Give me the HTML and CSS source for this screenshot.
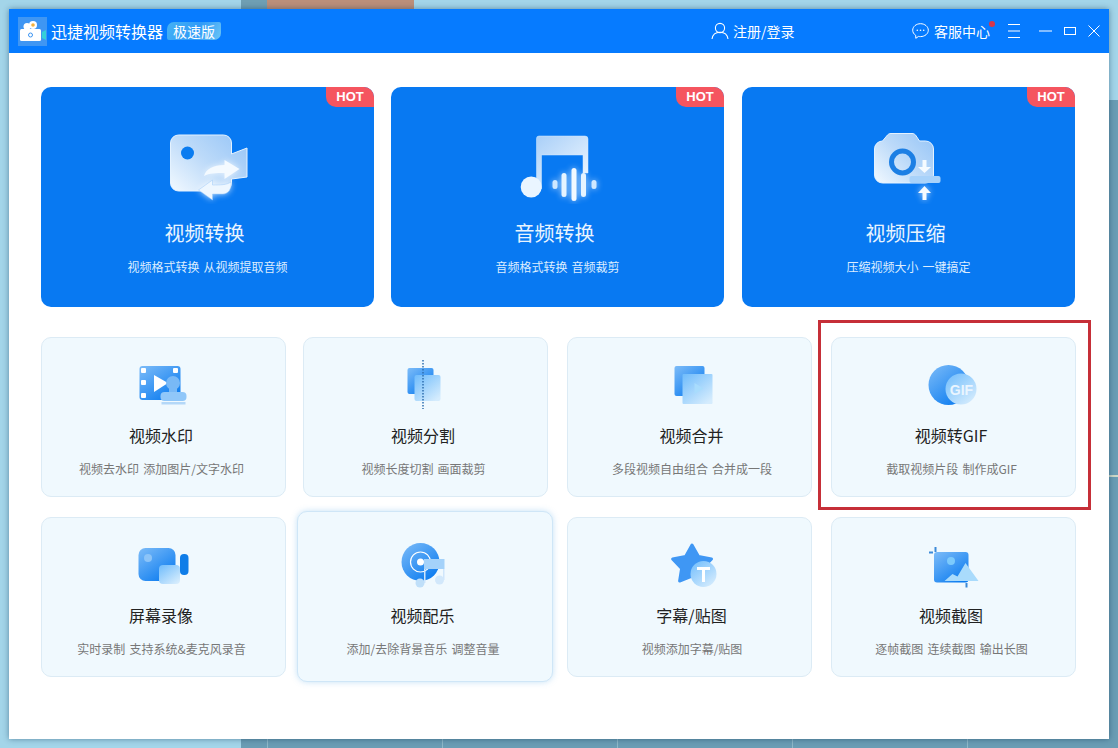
FILE: index.html
```html
<!DOCTYPE html>
<html lang="zh-CN">

<head>
  <meta charset="UTF-8">
  <title>迅捷视频转换器</title>
  <link rel="stylesheet" href="styles.css">
</head>

<body>
  <svg class="defs" width="0" height="0">
    <defs>
      <linearGradient id="glass" x1="0" y1="0" x2="0.8" y2="1">
        <stop offset="0" stop-color="#a9cff8" />
        <stop offset="1" stop-color="#eef7ff" />
      </linearGradient>
      <linearGradient id="glassSide" x1="1" y1="0.2" x2="0" y2="1">
        <stop offset="0" stop-color="#9cc8f7" />
        <stop offset="0.45" stop-color="#bcdaf9" />
        <stop offset="1" stop-color="#f2f9ff" />
      </linearGradient>
      <linearGradient id="deep" x1="0" y1="0" x2="0.8" y2="1">
        <stop offset="0" stop-color="#7dbcf8" />
        <stop offset="1" stop-color="#0a7bf0" />
      </linearGradient>
      <linearGradient id="pale" x1="0" y1="0" x2="0.8" y2="1">
        <stop offset="0" stop-color="#6fbcfc" />
        <stop offset="1" stop-color="#d5ecfd" />
      </linearGradient>
    </defs>
  </svg>

  <div class="window">
    <!-- title bar -->
    <header class="titlebar">
      <svg class="logo" width="29" height="29" viewBox="0 0 29 29">
        <rect width="29" height="29" fill="#3f96f3" />
        <circle cx="9" cy="9.5" r="3.5" fill="#fff" />
        <circle cx="15" cy="8" r="4" fill="#fff" />
        <circle cx="15" cy="8" r="1.8" fill="#f4b13d" />
        <rect x="2" y="12" width="21" height="12" rx="1.5" fill="#fff" />
        <path d="M24 15l4-2v10l-4-2z" fill="#35d0d8" />
        <circle cx="12.5" cy="18" r="2" fill="none" stroke="#3b94f2" />
      </svg>
      <span class="app-name">迅捷视频转换器</span>
      <span class="edition">极速版</span>

      <div class="login">
        <svg width="18" height="18" viewBox="0 0 18 18" fill="none" stroke="#fff" stroke-width="1.1">
          <circle cx="9" cy="6" r="4.6" />
          <path d="M1 17c.6-4.3 3.6-6.8 8-6.8s7.4 2.5 8 6.8" />
        </svg>
        <span>注册/登录</span>
      </div>

      <div class="service">
        <svg width="17" height="16" viewBox="0 0 17 16" fill="none" stroke="#fff" stroke-width="1">
          <path d="M8.5 .7c4.3 0 7.8 2.9 7.8 6.5s-3.5 6.4-7.8 6.4c-.8 0-1.4 0-2-.2L3.8 15.300l-.1-3C1.800 11.100.7 9.300.7 7.200.7 3.600 4.200.7 8.500.7z" />
          <circle cx="5.3" cy="7.2" r=".8" fill="#fff" stroke="none" />
          <circle cx="8.5" cy="7.2" r=".8" fill="#fff" stroke="none" />
          <circle cx="11.7" cy="7.2" r=".8" fill="#fff" stroke="none" />
        </svg>
        <span>客服中心</span>
        <i class="dot"></i>
      </div>

      <div class="win-btns">
        <svg width="12" height="14" viewBox="0 0 12 14" stroke="#fff" stroke-width="1">
          <path d="M0 .5h12M0 7h12M0 13.5h12" />
        </svg>
        <svg class="win-min" width="13" height="2" viewBox="0 0 13 2" stroke="#fff" stroke-width="1">
          <path d="M0 1h13" />
        </svg>
        <svg width="12" height="8" viewBox="0 0 12 8" fill="none" stroke="#fff" stroke-width="1">
          <rect x=".5" y=".5" width="11" height="7" />
        </svg>
        <svg width="12" height="12" viewBox="0 0 12 12" stroke="#fff" stroke-width="1">
          <path d="M.5 .5l11 11M11.5 .5l-11 11" />
        </svg>
      </div>
    </header>

    <main class="content">
      <!-- three big entries -->
      <section class="hero-row">
        <div class="hero">
          <span class="hot">HOT</span>
          <svg class="hero-icon" width="90" height="72" viewBox="0 0 90 72">
            <path d="M15.5 3h45a8 8 0 0 1 8 8v11l15.500-6v29l-15.500 2v4a8 8 0 0 1-8 8h-45a8 8 0 0 1-8-8V11a8 8 0 0 1 8-8z" fill="url(#glassSide)" stroke="#e4f2ff" />
            <circle cx="24.5" cy="21" r="6.500" fill="#0a7cf0" />
            <g class="glow">
              <path d="M41 44c2-7 9-11 20.500-11v-5l15 9-15 10v-6c-9 0-15 0-20.500 3z" fill="#f4faff" />
              <path d="M35.5 58l14-10v5c8 0 14 0 18.500-3 1 7-3 12-8 12H49.500v6z" fill="#eef7ff" stroke="#9cc8f7" stroke-width=".5" />
            </g>
          </svg>
          <h2>视频转换</h2>
          <p>视频格式转换 从视频提取音频</p>
        </div>
        <div class="hero">
          <span class="hot">HOT</span>
          <svg class="hero-icon" width="90" height="72" viewBox="0 0 90 72">
            <path d="M26 4h46a3 3 0 0 1 3 3v34h-5V23H28.500v34h-5V6.500A2.500 2.500 0 0 1 26 4z" fill="url(#glass)" stroke="#d5eaff" stroke-width=".5" />
            <circle cx="18.2" cy="55" r="10.500" fill="#eaf5ff" />
            <g class="glow" fill="#cfe8ff">
              <rect x="39.5" y="48" width="5" height="9" rx="2.500" />
              <rect x="48.5" y="41" width="5" height="24" rx="2.500" fill="#e6f4ff" />
              <rect x="58.5" y="36" width="5" height="33" rx="2.500" fill="#f2f9ff" />
              <rect x="68" y="41" width="5" height="24" rx="2.500" fill="#e6f4ff" />
              <rect x="78.5" y="48" width="5" height="9" rx="2.500" />
            </g>
          </svg>
          <h2>音频转换</h2>
          <p>音频格式转换 音频裁剪</p>
        </div>
        <div class="hero">
          <span class="hot">HOT</span>
          <svg class="hero-icon" width="90" height="72" viewBox="0 0 90 72">
            <path d="M18.5 9l5-6c1-1 2-1.500 3.500-1.500h21c1.500 0 2.500.5 3.500 1.500l4 6h6a8 8 0 0 1 8 8v26a8 8 0 0 1-8 8H18.500a8 8 0 0 1-8-8V17a8 8 0 0 1 8-8z" fill="url(#glassSide)" stroke="#e4f2ff" />
            <circle cx="38.5" cy="30" r="11" fill="none" stroke="#1c7fe4" stroke-width="5" />
            <path d="M58.5 28h4v7h4.500l-6.500 6-6.500-6h4.500z" fill="#f6fbff" />
            <rect x="45.5" y="44" width="31" height="7" rx="2" fill="#a8d2fa" />
            <path class="glow" d="M60.5 54l6.500 7h-4.500v7h-4v-7H54z" fill="#f6fbff" />
          </svg>
          <h2>视频压缩</h2>
          <p>压缩视频大小 一键搞定</p>
        </div>
      </section>

      <!-- tool grid -->
      <section class="tools">
        <div class="tool">
          <svg class="tool-icon" width="56" height="56" viewBox="0 0 56 56">
            <rect x="3.5" y="8" width="41" height="34" rx="3" fill="url(#deep)" />
            <g fill="#fff">
              <rect x="5" y="10" width="5" height="5" rx="1" />
              <rect x="5" y="22" width="5" height="5" rx="1" />
              <rect x="5" y="35" width="5" height="5" rx="1" />
              <rect x="37" y="10" width="5" height="5" rx="1" />
              <path d="M18 17l14 8-14 9z" />
            </g>
            <circle cx="37" cy="25" r="7" fill="#79b9f6" />
            <path d="M33 29h8v6h-8z" fill="#79b9f6" />
            <rect x="24.5" y="34" width="26" height="9" rx="4" fill="#90c7f9" />
            <rect x="25.5" y="44" width="24" height="2.500" fill="#b4d8f8" />
          </svg>
          <h3>视频水印</h3>
          <p>视频去水印 添加图片/文字水印</p>
        </div>
        <div class="tool">
          <svg class="tool-icon" width="56" height="56" viewBox="0 0 56 56">
            <rect x="9.5" y="10" width="26" height="26" rx="2" fill="url(#deep)" />
            <rect x="16.5" y="17" width="26" height="26" rx="2" fill="url(#pale)" />
            <path d="M25 2v49" stroke="#2f6fb0" stroke-width="1.500" stroke-dasharray="1.500 1.500" />
          </svg>
          <h3>视频分割</h3>
          <p>视频长度切割 画面裁剪</p>
        </div>
        <div class="tool">
          <svg class="tool-icon" width="56" height="56" viewBox="0 0 56 56">
            <rect x="12.5" y="8" width="30" height="30" rx="2" fill="url(#deep)" />
            <rect x="20.5" y="16" width="30" height="30" rx="1" fill="url(#pale)" />
            <path d="M32.5 25l9 5.500-9 5.500z" fill="#a8dcfd" />
          </svg>
          <h3>视频合并</h3>
          <p>多段视频自由组合 合并成一段</p>
        </div>
        <div class="tool">
          <svg class="tool-icon" width="56" height="56" viewBox="0 0 56 56">
            <circle cx="22.5" cy="27" r="20" fill="url(#deep)" />
            <circle cx="35" cy="31" r="15.500" fill="url(#pale)" />
            <text class="gif-text" x="35.500" y="36.500" text-anchor="middle">GIF</text>
          </svg>
          <h3>视频转GIF</h3>
          <p>截取视频片段 制作成GIF</p>
        </div>

        <div class="tool">
          <svg class="tool-icon" width="56" height="56" viewBox="0 0 56 56">
            <rect x="2.5" y="10" width="37" height="33" rx="7" fill="url(#deep)" />
            <circle cx="12" cy="20" r="4" fill="#8cc4f8" />
            <rect x="44" y="16" width="8.500" height="21" rx="4" fill="#0f7de8" />
            <rect x="23" y="27" width="21" height="19" rx="4" fill="url(#pale)" />
          </svg>
          <h3>屏幕录像</h3>
          <p>实时录制 支持系统&amp;麦克风录音</p>
        </div>
        <div class="tool tool-active">
          <svg class="tool-icon" width="56" height="56" viewBox="0 0 56 56">
            <circle cx="23.5" cy="24" r="19" fill="url(#deep)" />
            <circle cx="23.5" cy="24" r="10" fill="none" stroke="#fff" stroke-width="1.200" />
            <circle cx="23.5" cy="24" r="3.500" fill="#fff" />
            <path d="M27 21h20.500v10H27z" fill="#a4d2fa" />
            <path d="M27 31h1.500v14H27zM46 31h1.500v11H46z" fill="#cfe6fb" />
            <circle cx="23" cy="45" r="4.500" fill="#bfdff9" />
            <circle cx="42.5" cy="42" r="4.500" fill="#d2e8fb" />
          </svg>
          <h3>视频配乐</h3>
          <p>添加/去除背景音乐 调整音量</p>
        </div>
        <div class="tool">
          <svg class="tool-icon" width="56" height="56" viewBox="0 0 56 56">
            <path d="M30 7l6.500 11.500L49.500 21l-9 9.500L42.400 43 30 38l-12.400 5 2-12.500-9-9.500 13-2.500z" fill="#3f97f4" stroke="#3f97f4" stroke-width="3" stroke-linejoin="round" />
            <circle cx="41.5" cy="36" r="13" fill="url(#pale)" />
            <path d="M35 29h13v3h-5v12h-3V32h-5z" fill="#fff" />
          </svg>
          <h3>字幕/贴图</h3>
          <p>视频添加字幕/贴图</p>
        </div>
        <div class="tool">
          <svg class="tool-icon" width="56" height="56" viewBox="0 0 56 56">
            <rect x="8" y="14" width="34.500" height="30.500" rx="3" fill="url(#deep)" />
            <path d="M9.5 9v5M3 14.500h4M40.500 45v4.500" stroke="#3b8ad8" stroke-width="2" />
            <circle cx="25" cy="23" r="4" fill="#7ccafc" />
            <path d="M18.5 43l8-7 5 2.500 8-13.500 13 18z" fill="#a9dbfc" />
          </svg>
          <h3>视频截图</h3>
          <p>逐帧截图 连续截图 输出长图</p>
        </div>
      </section>
    </main>
  </div>

  <!-- red marker drawn on the screenshot -->
  <div class="marker"></div>
</body>

</html>
```

FILE: styles.css
```css
* {
  box-sizing: border-box;
}

html,
body {
  height: 100%;
}

body {
  margin: 0;
  padding: 9px;
  overflow: hidden;
  position: relative;
  font-family: "Noto Sans CJK SC", "Noto Sans", sans-serif;
  background-color: #6a9db4;
  /* desktop wallpaper showing round the window */
  background-image:
    linear-gradient(to right, #a3d5e9 241px, #6f9fb3 241px, #6f9fb3 267px, #bc8f7a 267px, #bc8f7a 414px, #a3d5e9 414px),
    linear-gradient(#cdd9c8, #cdd9c8),
    repeating-linear-gradient(to right, #8fb9c9 0, #8fb9c9 1px, transparent 1px, transparent 175px),
    linear-gradient(to right, #a3d5e9 241px, #6a9db4 241px);
  background-size: 100% 100px, 9px 2px, 100% 100%, 100% 100%;
  background-position: 0 0, right 0 top 475px, 267px 0, 0 0;
  background-repeat: no-repeat;
}

.defs {
  position: absolute;
}

.window {
  width: 1100px;
  height: 730px;
  background: #fff;
  box-shadow: 0 0 6px rgba(0, 40, 70, 0.45);
}

/* title bar */
.titlebar {
  height: 44px;
  background: #067bff;
  color: #fff;
  display: flex;
  align-items: center;
  padding-left: 9px;
  font-size: 14px;
}

.logo {
  flex: none;
}

.app-name {
  font-size: 16px;
  margin-left: 4px;
}

.edition {
  margin-left: 4px;
  width: 54px;
  height: 18px;
  line-height: 18px;
  text-align: center;
  background: linear-gradient(120deg, #45b2f4, #2f9af8 55%, #6cc6f5);
  border-radius: 7px 2px 7px 2px;
}

.login {
  margin-left: 490px;
  display: flex;
  align-items: center;
  gap: 4px;
  width: 86px;
}

.service {
  margin-left: 115px;
  display: flex;
  align-items: center;
  gap: 5px;
  position: relative;
}

.dot {
  position: absolute;
  right: -5px;
  top: 0;
  width: 6px;
  height: 6px;
  border-radius: 50%;
  background: #d8364a;
}

.win-btns {
  margin-left: 18px;
  display: flex;
  align-items: center;
  gap: 12px;
}

.win-min {
  margin-left: 7px;
}

/* content */
.content {
  padding: 34px 0 0 32px;
}

.hero-row {
  display: grid;
  grid-template-columns: 350px 351px 333px;
}

.hero {
  width: 333px;
  height: 220px;
  position: relative;
  padding-top: 45px;
  display: flex;
  flex-direction: column;
  align-items: center;
  background: #0879f2;
  border-radius: 10px;
  color: #fff;
}

.hot {
  position: absolute;
  top: 0;
  right: 0;
  width: 48px;
  height: 20px;
  line-height: 20px;
  text-align: center;
  font-family: "Liberation Sans", sans-serif;
  font-size: 13px;
  font-weight: 700;
  background: #f5555f;
  border-radius: 0 10px 0 10px;
}

.hero-icon {
  display: block;
  flex: none;
}

.glow {
  filter: drop-shadow(0 0 3px rgba(255, 255, 255, 0.7));
}

.hero h2 {
  margin: 14px 6px 0 0;
  font-size: 20px;
  font-weight: 400;
  line-height: 30px;
  color: #e8f4ff;
}

.hero p {
  margin: 9px 0 0;
  font-size: 12px;
  word-spacing: 1.5px;
  line-height: 20px;
  color: #dcedff;
}

.tools {
  margin-top: 30px;
  display: grid;
  grid-template-columns: 262px 264px 264px 245px;
  grid-auto-rows: 160px;
  row-gap: 20px;
}

.tool {
  width: 245px;
  height: 160px;
  padding-top: 20px;
  display: flex;
  flex-direction: column;
  align-items: center;
  background: #f0f9fe;
  border: 1px solid #dcebf5;
  border-radius: 10px;
}

.tool-active {
  width: 256px;
  height: 171px;
  margin: -6px 0 0 -6px;
  padding-top: 26px;
  border-color: #cfe6f7;
  box-shadow: 0 0 6px rgba(90, 170, 230, 0.35);
}

.tool-icon {
  display: block;
  flex: none;
}

.tool h3 {
  margin: 9px 5px 0 0;
  font-size: 16px;
  font-weight: 400;
  line-height: 24px;
  color: #222;
}

.tool p {
  margin: 13px 4px 0 0;
  font-size: 12px;
  word-spacing: 1.5px;
  line-height: 18px;
  color: #777;
}

/* third column sits a little right of centre */
.tool:nth-child(4n+3) h3 {
  margin-right: 0;
  margin-left: 4px;
}

.tool:nth-child(4n+3) p {
  margin-right: 0;
  margin-left: 5px;
}

.gif-text {
  font-family: "Liberation Sans", sans-serif;
  font-size: 14px;
  font-weight: 700;
  fill: #eaf5ff;
}

.marker {
  position: absolute;
  left: 818px;
  top: 320px;
  width: 273px;
  height: 190px;
  border: 3px solid #c62f38;
}
```
